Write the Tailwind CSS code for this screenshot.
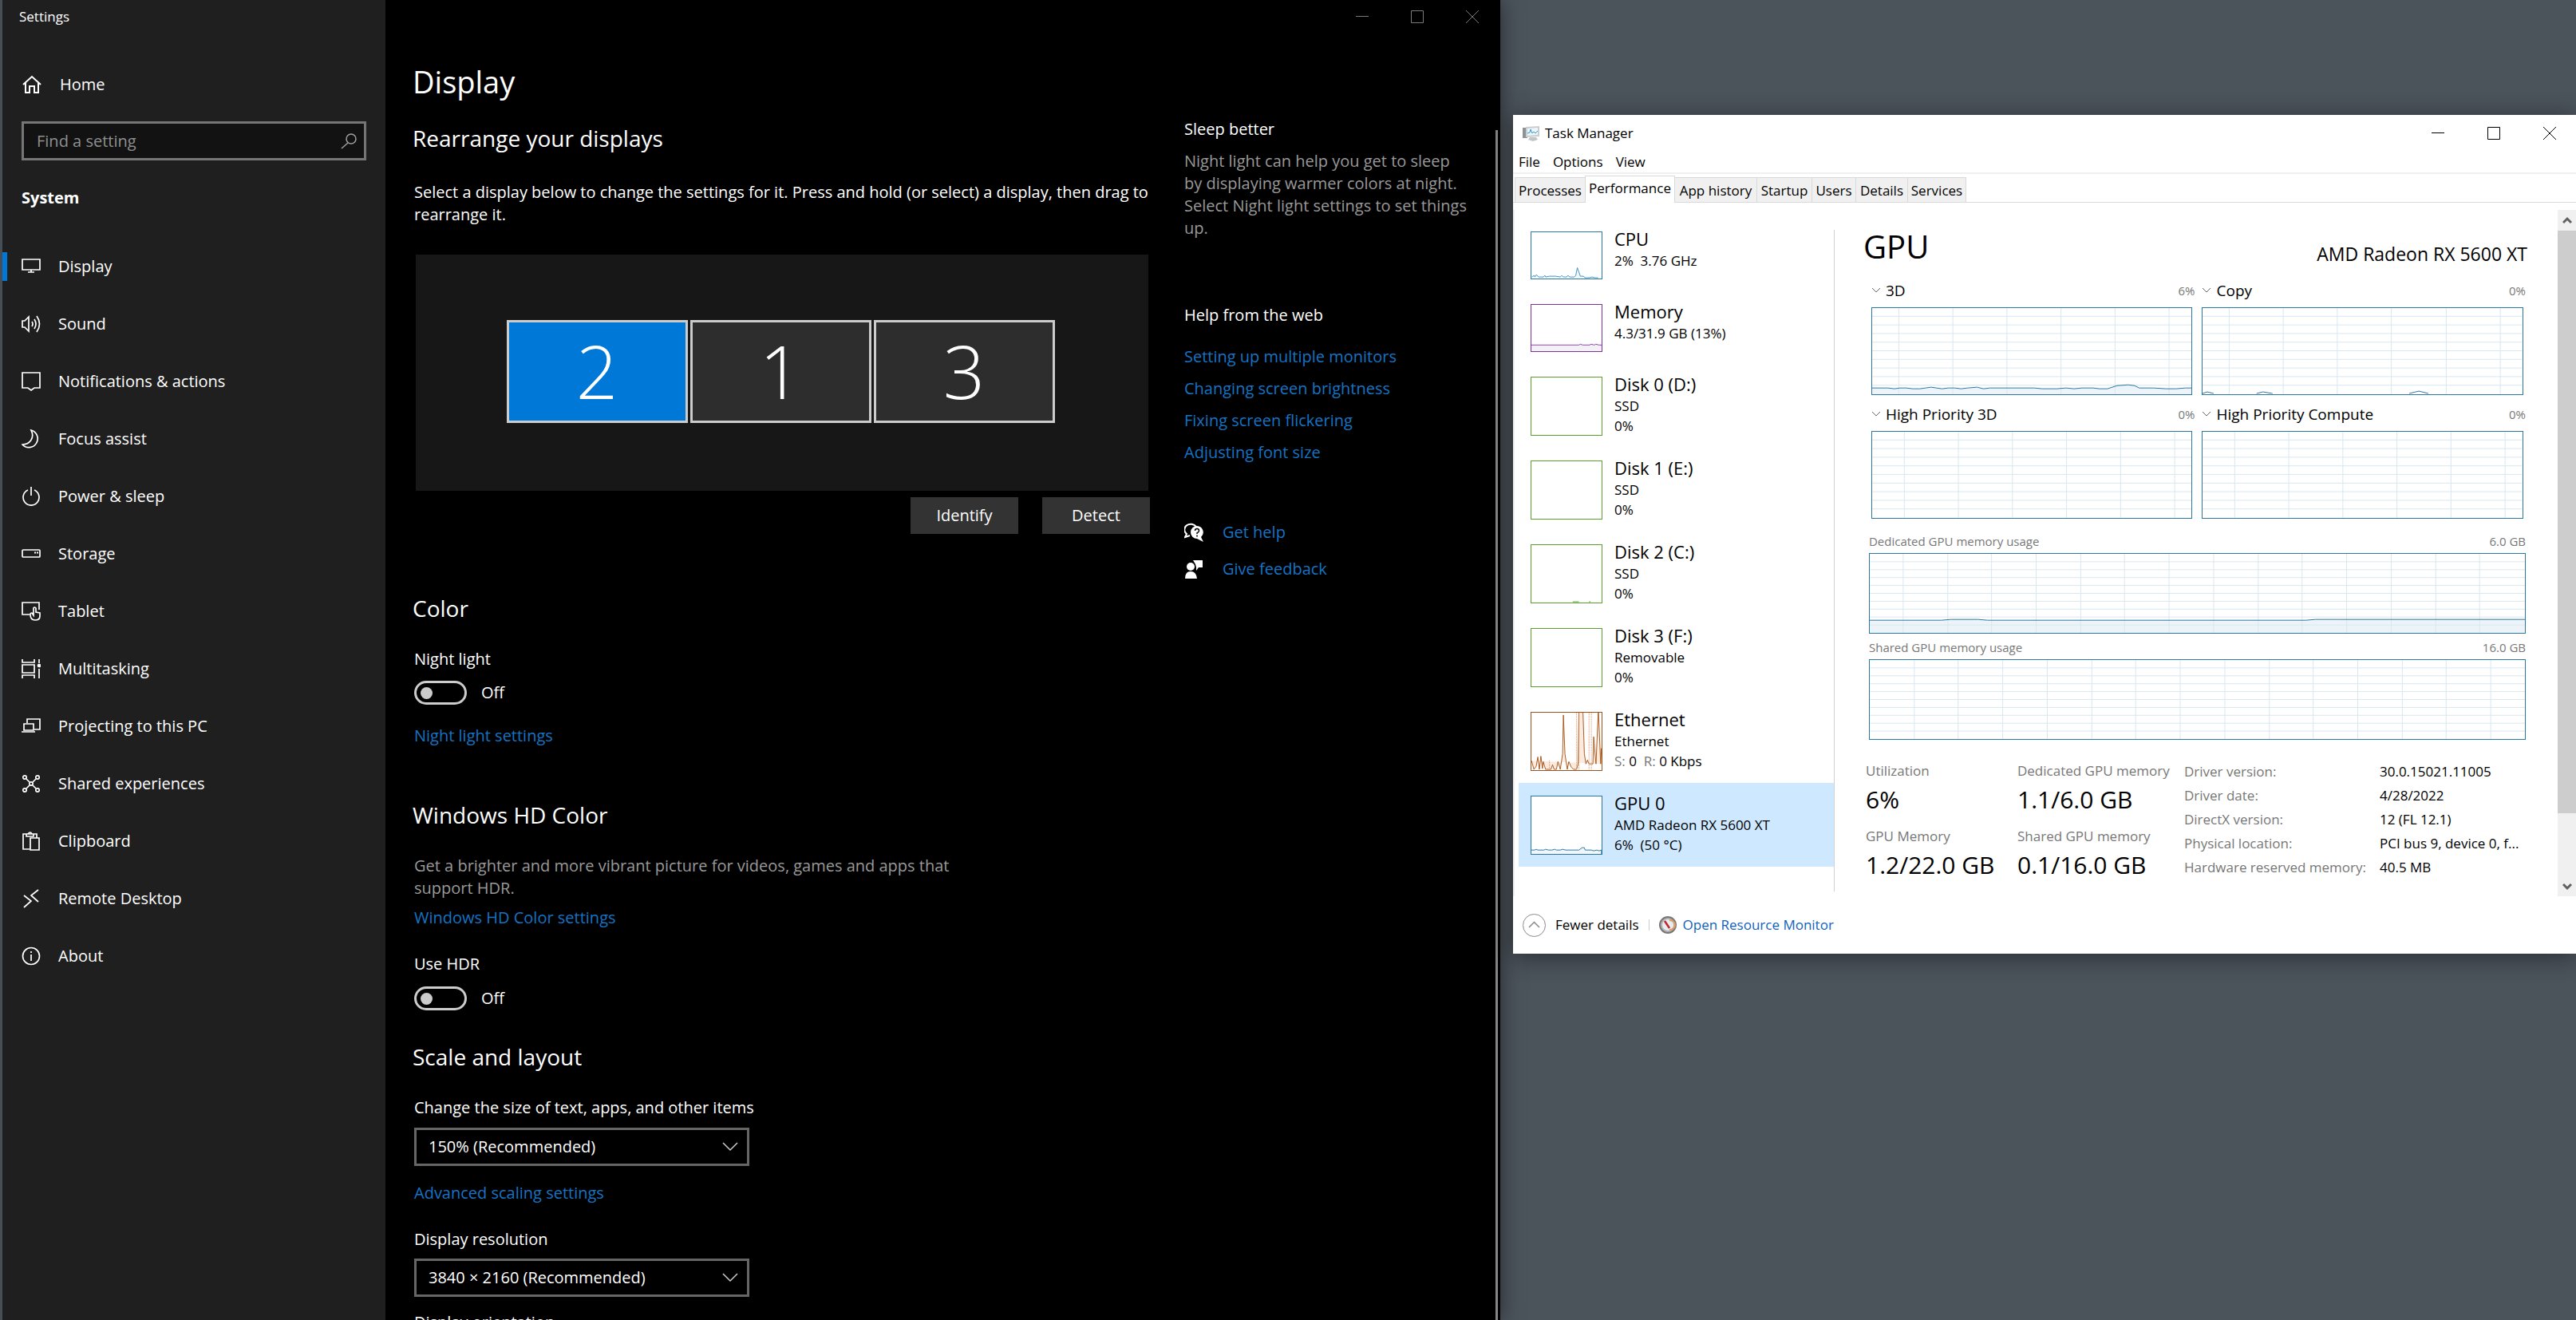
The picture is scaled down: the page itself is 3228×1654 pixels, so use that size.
<!DOCTYPE html>
<html lang="en">
<head>
    <meta charset="UTF-8">
    <meta name="viewport" content="width=device-width, initial-scale=1.0">
    <title>Settings - Display</title>
    <script src="https://cdn.jsdelivr.net/npm/@tailwindcss/browser@4"></script>
    <style>
        body { font-family: 'Open Sans', 'Noto Sans', sans-serif; }
    </style>
</head>
<body class="h-screen overflow-hidden bg-[#4b535b] flex">

    <!-- Settings window -->
    <div class="w-[58.24%] shrink-0 flex border-l-3 border-[#464f55] bg-black text-white text-[20px] leading-[28px] shadow-[0_0_24px_rgba(0,0,0,0.5)]">

        <!-- Sidebar -->
        <aside class="w-[480px] shrink-0 bg-[#1f1f1f]">
            <div class="h-[42px] pl-[21px] flex items-center text-[17px]">Settings</div>
            <a href="#" class="mt-[40px] h-[48px] pl-[24px] flex items-center gap-[22px]">
                <svg class="w-[26px] h-[26px]" viewBox="0 0 26 26" fill="none" stroke="currentColor" stroke-width="2"><path d="M2 13 13 3l11 10M5 11v12h5v-8h6v8h5V11"/></svg>
                Home
            </a>
            <div class="mt-[22px] mx-[24px] h-[49px] flex items-center border-3 border-[#767676] bg-[#121212] pr-[9px]">
                <input type="text" aria-label="Find a setting" placeholder="Find a setting" class="flex-1 min-w-0 h-full bg-transparent pl-[16px] outline-none placeholder:text-[#8f8f8f] placeholder:opacity-100">
                <svg class="w-[20px] h-[20px] text-[#a0a0a0]" viewBox="0 0 20 20" fill="none" stroke="currentColor" stroke-width="1.5"><circle cx="13" cy="7" r="6"/><path d="M9 12 1 19"/></svg>
            </div>
            <h2 class="mt-[33px] pl-[24px] font-bold">System</h2>
            <nav class="mt-[36px]">
                <a href="#" class="h-[72px] flex items-center">
                    <span class="w-[6px] h-[36px] mr-[18px] bg-[#0078d7]"></span>
                    <svg class="w-[24px] h-[24px] mr-[22px]" viewBox="0 0 24 24" fill="none" stroke="currentColor" stroke-width="1.7"><path d="M1 3h22v13H1zM8 19h8M12 16v3"/></svg>
                    Display
                </a>
                <a href="#" class="h-[72px] pl-[24px] flex items-center gap-[22px]">
                    <svg class="w-[24px] h-[24px]" viewBox="0 0 24 24" fill="none" stroke="currentColor" stroke-width="1.7"><path d="M1 8h3l5-5v18l-5-5H1zM13 9q2 3 0 6M16 6q4 6 0 12M19 2q7 10 0 20"/></svg>
                    Sound
                </a>
                <a href="#" class="h-[72px] pl-[24px] flex items-center gap-[22px]">
                    <svg class="w-[24px] h-[24px]" viewBox="0 0 24 24" fill="none" stroke="currentColor" stroke-width="1.7"><path d="M1 1h22v19h-7l-4 3-4-3H1z"/></svg>
                    Notifications &amp; actions
                </a>
                <a href="#" class="h-[72px] pl-[24px] flex items-center gap-[22px]">
                    <svg class="w-[24px] h-[24px]" viewBox="0 0 24 24" fill="none" stroke="currentColor" stroke-width="1.7"><path d="M12 1a11 11 0 1 1-11 18C10 19 17 11 12 1z"/></svg>
                    Focus assist
                </a>
                <a href="#" class="h-[72px] pl-[24px] flex items-center gap-[22px]">
                    <svg class="w-[24px] h-[24px]" viewBox="0 0 24 24" fill="none" stroke="currentColor" stroke-width="1.7"><path d="M12 0v11M8 4a10 10 0 1 0 8 0"/></svg>
                    Power &amp; sleep
                </a>
                <a href="#" class="h-[72px] pl-[24px] flex items-center gap-[22px]">
                    <svg class="w-[24px] h-[24px]" viewBox="0 0 24 24" fill="none" stroke="currentColor" stroke-width="1.7"><rect x="1" y="7" width="22" height="9" rx="1"/><path d="M16 10.500h2M19 10.500h2" stroke-width="2"/></svg>
                    Storage
                </a>
                <a href="#" class="h-[72px] pl-[24px] flex items-center gap-[22px]">
                    <svg class="w-[24px] h-[24px]" viewBox="0 0 24 24" fill="none" stroke="currentColor" stroke-width="1.7"><path d="M10 16H1V1h21v9M11 16q0-2 2-2l2 3V8q1-2 3 0v5l5 1v4q0 5-6 5-6 0-6-7z"/></svg>
                    Tablet
                </a>
                <a href="#" class="h-[72px] pl-[24px] flex items-center gap-[22px]">
                    <svg class="w-[24px] h-[24px]" viewBox="0 0 24 24" fill="none" stroke="currentColor" stroke-width="1.7"><path d="M1 0v4h15V0M1 24v-4h15v4M1 7h15v10H1zM22 0v5M22 12v12"/><circle cx="22" cy="8" r="1.5" fill="currentColor"/></svg>
                    Multitasking
                </a>
                <a href="#" class="h-[72px] pl-[24px] flex items-center gap-[22px]">
                    <svg class="w-[24px] h-[24px]" viewBox="0 0 24 24" fill="none" stroke="currentColor" stroke-width="1.7"><path d="M7 8V3h16v13h-7M3 9h12v8H3zM0 19h17"/></svg>
                    Projecting to this PC
                </a>
                <a href="#" class="h-[72px] pl-[24px] flex items-center gap-[22px]">
                    <svg class="w-[24px] h-[24px]" viewBox="0 0 24 24" fill="none" stroke="currentColor" stroke-width="1.7"><path d="m6 6 4 4M18 6l-4 4M6 18l4-4M18 18l-4-4"/><circle cx="12" cy="12" r="2.2"/><circle cx="4" cy="4" r="2.2"/><circle cx="20" cy="4" r="2.2"/><circle cx="4" cy="20" r="2.2"/><circle cx="20" cy="20" r="2.2"/></svg>
                    Shared experiences
                </a>
                <a href="#" class="h-[72px] pl-[24px] flex items-center gap-[22px]">
                    <svg class="w-[24px] h-[24px]" viewBox="0 0 24 24" fill="none" stroke="currentColor" stroke-width="1.7"><path d="M10 22H2V3h17v5M6 3v3h9V3h-2q-2-4-5 0zM11 8h11v15H11z"/></svg>
                    Clipboard
                </a>
                <a href="#" class="h-[72px] pl-[24px] flex items-center gap-[22px]">
                    <svg class="w-[24px] h-[24px]" viewBox="0 0 24 24" fill="none" stroke="currentColor" stroke-width="1.7"><path d="m3 8 9 7-9 8M21 1l-9 7 9 8"/></svg>
                    Remote Desktop
                </a>
                <a href="#" class="h-[72px] pl-[24px] flex items-center gap-[22px]">
                    <svg class="w-[24px] h-[24px]" viewBox="0 0 24 24" fill="none" stroke="currentColor" stroke-width="1.7"><circle cx="12" cy="12" r="10.5"/><path d="M12 10v8M12 6v2"/></svg>
                    About
                </a>
            </nav>
        </aside>

        <!-- Page -->
        <main class="flex-1 min-w-0 flex flex-col">
            <div class="h-[42px] shrink-0 pr-[27px] flex items-center justify-end gap-[53px] text-[#7a7a7a]">
                <button type="button" aria-label="Minimize"><svg class="w-[16px] h-[16px]" viewBox="0 0 16 16" fill="none" stroke="currentColor"><path d="M0 7.500h16"/></svg></button>
                <button type="button" aria-label="Maximize"><svg class="w-[16px] h-[16px]" viewBox="0 0 16 16" fill="none" stroke="currentColor"><path d="M.5.5h15v15H.5z"/></svg></button>
                <button type="button" aria-label="Close"><svg class="w-[16px] h-[16px]" viewBox="0 0 16 16" fill="none" stroke="currentColor"><path d="m0 0 16 16M16 0 0 16"/></svg></button>
            </div>

            <div class="flex-1 min-h-0 flex">
                <div class="w-[926px] shrink-0 pl-[34px] pt-[34px]">
                    <h1 class="text-[38px] leading-[52px]">Display</h1>
                    <h2 class="mt-[27px] text-[28px] leading-[36px]">Rearrange your displays</h2>
                    <div class="pl-[2px]">
                        <p class="mt-[36px] -mr-[32px]">Select a display below to change the settings for it. Press and hold (or select) a display, then drag to<br>rearrange it.</p>
                        <div class="mt-[36px] ml-[2px] -mr-[30px] pr-[4px] pb-[4px] h-[296px] bg-[#171717] flex items-center justify-center gap-[3px] text-[92px] leading-[100px] font-light">
                            <button type="button" class="w-[227px] h-[129px] border-3 border-[#ccc] bg-[#0078d7] flex items-center justify-center">2</button>
                            <button type="button" class="w-[227px] h-[129px] border-3 border-[#ccc] bg-[#2d2d2d] flex items-center justify-center">1</button>
                            <button type="button" class="w-[227px] h-[129px] border-3 border-[#ccc] bg-[#2d2d2d] flex items-center justify-center">3</button>
                        </div>
                        <div class="mt-[8px] -mr-[32px] flex justify-end gap-[30px]">
                            <button type="button" class="w-[135px] h-[46px] bg-[#333]">Identify</button>
                            <button type="button" class="w-[135px] h-[46px] bg-[#333]">Detect</button>
                        </div>
                    </div>

                    <h2 class="mt-[75px] text-[28px] leading-[36px]">Color</h2>
                    <div class="pl-[2px] flex flex-col items-start">
                        <label for="night-light" class="mt-[32px]">Night light</label>
                        <div class="mt-[13px] h-[30px] flex items-center gap-[18px]">
                            <input type="checkbox" id="night-light" class="appearance-none w-[66px] h-[30px] rounded-full border-3 border-[#ccc] flex items-center pl-[5px] before:w-[15px] before:h-[15px] before:rounded-full before:bg-[#ccc]">
                            <span>Off</span>
                        </div>
                        <a href="#" class="mt-[25px] text-[#1673c4]">Night light settings</a>
                    </div>

                    <h2 class="mt-[67px] text-[28px] leading-[36px]">Windows HD Color</h2>
                    <div class="pl-[2px] flex flex-col items-start">
                        <p class="mt-[32px] w-[700px] text-[#999]">Get a brighter and more vibrant picture for videos, games and apps that support HDR.</p>
                        <a href="#" class="mt-[9px] text-[#1673c4]">Windows HD Color settings</a>
                        <label for="use-hdr" class="mt-[30px]">Use HDR</label>
                        <div class="mt-[14px] h-[30px] flex items-center gap-[18px]">
                            <input type="checkbox" id="use-hdr" class="appearance-none w-[66px] h-[30px] rounded-full border-3 border-[#ccc] flex items-center pl-[5px] before:w-[15px] before:h-[15px] before:rounded-full before:bg-[#ccc]">
                            <span>Off</span>
                        </div>
                    </div>

                    <h2 class="mt-[40px] text-[28px] leading-[36px]">Scale and layout</h2>
                    <div class="pl-[2px] flex flex-col items-start">
                        <label for="scale" class="mt-[32px]">Change the size of text, apps, and other items</label>
                        <div class="mt-[11px] w-[420px] grid items-center">
                            <select id="scale" class="col-start-1 row-start-1 appearance-none w-full h-[48px] pl-[15px] border-3 border-[#666] bg-black">
                                <option>150% (Recommended)</option>
                            </select>
                            <svg class="col-start-1 row-start-1 justify-self-end mr-[14px] w-[20px] h-[12px] pointer-events-none" viewBox="0 0 20 12" fill="none" stroke="#ccc" stroke-width="1.5"><path d="m1 1 9 9 9-9"/></svg>
                        </div>
                        <a href="#" class="mt-[20px] text-[#1673c4]">Advanced scaling settings</a>
                        <label for="resolution" class="mt-[30px]">Display resolution</label>
                        <div class="mt-[10px] w-[420px] grid items-center">
                            <select id="resolution" class="col-start-1 row-start-1 appearance-none w-full h-[48px] pl-[15px] border-3 border-[#666] bg-black">
                                <option>3840 × 2160 (Recommended)</option>
                            </select>
                            <svg class="col-start-1 row-start-1 justify-self-end mr-[14px] w-[20px] h-[12px] pointer-events-none" viewBox="0 0 20 12" fill="none" stroke="#ccc" stroke-width="1.5"><path d="m1 1 9 9 9-9"/></svg>
                        </div>
                        <div class="mt-[18px]">Display orientation</div>
                    </div>
                </div>

                <!-- Related help -->
                <div class="flex-1 min-w-0 pl-[75px] pt-[106px]">
                    <h3>Sleep better</h3>
                    <p class="mt-[12px] max-w-[372px] text-[#999]">Night light can help you get to sleep<br>by displaying warmer colors at night. Select Night light settings to set things up.</p>
                    <h3 class="mt-[81px]">Help from the web</h3>
                    <div class="mt-[24px] flex flex-col items-start gap-[12px] text-[#1673c4]">
                        <a href="#">Setting up multiple monitors</a>
                        <a href="#">Changing screen brightness</a>
                        <a href="#">Fixing screen flickering</a>
                        <a href="#">Adjusting font size</a>
                    </div>
                    <div class="mt-[72px] flex items-center gap-[24px]">
                        <svg class="w-[24px] h-[24px]" viewBox="0 0 24 24"><path d="M15 5A8 7 0 1 0 3 14l-2 4 6-2" fill="none" stroke="#fff" stroke-width="2"/><path d="M16 4a8 8 0 1 0 0 16l8 4-3-6a8 8 0 0 0-5-14z" fill="#fff"/><path d="M13.500 10q0-2.500 2.500-2.500T18.500 10q0 1.500-2.500 3v1M16 15.500v2" fill="none" stroke="#000" stroke-width="1.500"/></svg>
                        <a href="#" class="text-[#1673c4]">Get help</a>
                    </div>
                    <div class="mt-[18px] flex items-center gap-[24px]">
                        <svg class="w-[24px] h-[24px]" viewBox="0 0 24 24" fill="#fff"><circle cx="8" cy="9" r="5"/><path d="M1 24q0-9 7-9t8 9zM11 1h12v9h-5l-3 4v-4l-1-4z"/></svg>
                        <a href="#" class="text-[#1673c4]">Give feedback</a>
                    </div>
                </div>
                <div class="w-[3px] mt-[121px] mr-[3px] bg-[#858585]"></div>
            </div>
        </main>
    </div>

    <!-- Task Manager window -->
    <div class="flex-1 min-w-0 pl-[16px] pt-[144px]">
        <div class="bg-white text-black text-[17px] leading-[24px] shadow-[0_4px_28px_rgba(0,0,0,0.45)]">
            <div class="h-[46px] pl-[12px] pr-[25px] flex items-center">
                <svg class="w-[22px] h-[20px]" viewBox="0 0 22 20"><path d="M0 3h6v13H0z" fill="#8d9296"/><path d="M4 2 21 1v13L4 15z" fill="#c9cdd1"/><path d="M6 4 19 3v9L6 13z" fill="#eaf6fc"/><path d="m6 10 3-1 1-4 2 5 2-2 2 2 3-3" fill="none" stroke="#3d97cd"/><path d="M9 15h8l2 3-6 2-6-2z" fill="#c2c5c8"/></svg>
                <span class="ml-[6px] flex-1">Task Manager</span>
                <div class="flex gap-[54px]">
                    <button type="button" aria-label="Minimize"><svg class="w-[16px] h-[16px]" viewBox="0 0 16 16" fill="none" stroke="#000"><path d="M0 7.500h16"/></svg></button>
                    <button type="button" aria-label="Maximize"><svg class="w-[16px] h-[16px]" viewBox="0 0 16 16" fill="none" stroke="#000"><path d="M.5.5h15v15H.5z"/></svg></button>
                    <button type="button" aria-label="Close"><svg class="w-[16px] h-[16px]" viewBox="0 0 16 16" fill="none" stroke="#000"><path d="m0 0 16 16M16 0 0 16"/></svg></button>
                </div>
            </div>
            <div class="h-[28px] pl-[7px] flex gap-[16px] border-b-2 border-[#f0f0f0]">
                <button type="button">File</button>
                <button type="button">Options</button>
                <button type="button">View</button>
            </div>

            <div class="h-[36px] pl-[2px] flex items-end border-b border-[#d9d9d9]" role="tablist">
                <button type="button" role="tab" class="w-[88px] h-[31px] pt-[2px] bg-[#f0f0f0] border-t border-l border-[#d9d9d9]">Processes</button>
                <button type="button" role="tab" aria-selected="true" class="w-[113px] h-[34px] -mb-px pb-[4px] bg-white border-t border-x border-[#d9d9d9]">Performance</button>
                <button type="button" role="tab" class="w-[103px] h-[31px] pt-[2px] bg-[#f0f0f0] border-t border-r border-[#d9d9d9]">App history</button>
                <button type="button" role="tab" class="w-[69px] h-[31px] pt-[2px] bg-[#f0f0f0] border-t border-r border-[#d9d9d9]">Startup</button>
                <button type="button" role="tab" class="w-[55px] h-[31px] pt-[2px] bg-[#f0f0f0] border-t border-r border-[#d9d9d9]">Users</button>
                <button type="button" role="tab" class="w-[65px] h-[31px] pt-[2px] bg-[#f0f0f0] border-t border-r border-[#d9d9d9]">Details</button>
                <button type="button" role="tab" class="w-[73px] h-[31px] pt-[2px] bg-[#f0f0f0] border-t border-r border-[#d9d9d9]">Services</button>
            </div>

            <div class="mt-[9px] flex border-l-2 border-[#f0f0f0]">
                <!-- Resource list -->
                <ul class="w-[400px] shrink-0 pl-[5px] pt-[11px] leading-[25px]">
                    <li class="h-[91px] pt-[10px] pl-[15px] flex gap-[15px]">
                        <svg class="mt-[6px] w-[90px] h-[60px] border border-[#2a77a3]" viewBox="0 0 90 60" fill="#f1f6fa" stroke="#3f93c3"><path d="m0 58 3-2 1 2 2-3 3 3h6l2-2 1 2 5-1h8l6 1 2-2 2 2h4l2-2 2 2h6l2-2 2-10 4 11h4l2 2h6l3-1 4 1h4"/></svg>
                        <div><div class="text-[22px] leading-[30px]">CPU</div><div class="whitespace-pre">2%  3.76 GHz</div></div>
                    </li>
                    <li class="h-[91px] pt-[10px] pl-[15px] flex gap-[15px]">
                        <svg class="mt-[6px] w-[90px] h-[60px] border border-[#7a3396]" viewBox="0 0 90 60" fill="#f4f0f8" stroke="#8c3fa8"><path d="M-1 61V52h62l2-1 3 1h9l2-1 4 1 2-1 4 1h4v9z"/></svg>
                        <div><div class="text-[22px] leading-[30px]">Memory</div><div>4.3/31.9 GB (13%)</div></div>
                    </li>
                    <li class="h-[105px] pt-[10px] pl-[15px] flex gap-[15px]">
                        <div class="mt-[6px] w-[90px] h-[74px] border border-[#5ba02d]"></div>
                        <div><div class="text-[22px] leading-[30px]">Disk 0 (D:)</div><div>SSD</div><div>0%</div></div>
                    </li>
                    <li class="h-[105px] pt-[10px] pl-[15px] flex gap-[15px]">
                        <div class="mt-[6px] w-[90px] h-[74px] border border-[#5ba02d]"></div>
                        <div><div class="text-[22px] leading-[30px]">Disk 1 (E:)</div><div>SSD</div><div>0%</div></div>
                    </li>
                    <li class="h-[105px] pt-[10px] pl-[15px] flex gap-[15px]">
                        <svg class="mt-[6px] w-[90px] h-[74px] border border-[#5ba02d]" viewBox="0 0 90 74" fill="none" stroke="#5ba02d"><path d="M53 73h8M74 73h2"/></svg>
                        <div><div class="text-[22px] leading-[30px]">Disk 2 (C:)</div><div>SSD</div><div>0%</div></div>
                    </li>
                    <li class="h-[105px] pt-[10px] pl-[15px] flex gap-[15px]">
                        <div class="mt-[6px] w-[90px] h-[74px] border border-[#5ba02d]"></div>
                        <div><div class="text-[22px] leading-[30px]">Disk 3 (F:)</div><div>Removable</div><div>0%</div></div>
                    </li>
                    <li class="h-[105px] pt-[10px] pl-[15px] flex gap-[15px]">
                        <svg class="mt-[6px] w-[90px] h-[74px] border border-[#99541f]" viewBox="0 0 90 74" fill="#fbeade" stroke="#a9591e">
                            <path d="m0 62 3 11 3-4 2-12 2 16 2-17 2 16 1-9 3 10h7l2-6 2 6h3l2-10 3 10 3-20 1-50 2 50 3 20 2-10 3 7 3 3h4l2-7 1-73h5l2 60 2 13 2-5 2 5h5l1-35 2 25 1 10 3-71 3 71 1-20 3 15 2 5"/>
                            <path d="M58 0v73M74 0v73M77 0v73M23 62v11M61 0v73" fill="none" stroke="#e08654" stroke-dasharray="1 1"/>
                        </svg>
                        <div><div class="text-[22px] leading-[30px]">Ethernet</div><div>Ethernet</div><div class="whitespace-pre"><span class="text-[#777]">S:</span> 0  <span class="text-[#777]">R:</span> 0 Kbps</div></div>
                    </li>
                    <li class="h-[105px] pt-[10px] pl-[15px] flex gap-[15px] bg-[#cde8ff]">
                        <svg class="mt-[6px] w-[90px] h-[74px] border border-[#2a77a3] bg-white" viewBox="0 0 90 74" fill="#f1f6fa" stroke="#2a77a3"><path d="M-1 75v-6h5l2-1 2 1h8l2-1 4 1h4l4-1 2 1h5l3-1 4 1h17l4-3h3l1 3h8l3 1 4-1 3 1 3-1v6z"/></svg>
                        <div><div class="text-[22px] leading-[30px]">GPU 0</div><div>AMD Radeon RX 5600 XT</div><div class="whitespace-pre">6%  (50 °C)</div></div>
                    </li>
                </ul>
                <div class="w-px mt-[25px] mb-[6px] bg-[#d0d0d0]"></div>

                <!-- GPU detail -->
                <section class="flex-1 min-w-0 pl-[39px] pr-[38px] pt-[20px] pb-[19px]">
                    <div class="h-[52px] flex justify-between">
                        <h2 class="-ml-[3px] text-[40px] leading-[52px]">GPU</h2>
                        <div class="pt-[19px] text-[23px] leading-[32px]">AMD Radeon RX 5600 XT</div>
                    </div>

                    <div class="mt-[17px] pl-[7px] pr-[5px] grid grid-cols-2 gap-x-[12px] gap-y-[12px]">
                        <div>
                            <div class="h-[24px] flex items-center text-[19px]">
                                <svg class="w-[12px] h-[8px] mr-[6px]" viewBox="0 0 12 8" fill="none" stroke="#666"><path d="m1 1 5 5 5-5"/></svg>3D
                                <span class="ml-auto -mr-[3px] text-[15px] text-[#777]">6%</span>
                            </div>
                            <svg class="mt-[9px] w-full h-[110px] border border-[#2a77a3]" viewBox="0 0 402 110" preserveAspectRatio="none" fill="none">
                                <path d="M0 110v-8h20l8 1 7-1h8l8 1h9l14-2 14 2 8-1h8l8 1 8-1 12-1 8 2 8-1h56l10 1h18l12-1 10 1 10-1h14l8 1h10l12-4 14-1 8 1 6 3h18l16 1h12l12-1h8l7 2 8-1h15v7z" fill="#edf4f9"/>
                                <path d="M33.500 0v110m68-110v110m68-110v110m68-110v110m68-110v110m68-110v110M0 10.500h402M0 21.500h402M0 32.500h402M0 43.500h402M0 54.500h402M0 65.500h402M0 76.500h402M0 87.500h402M0 98.500h402" stroke="#d9e7ee"/>
                                <path d="M0 102h20l8 1 7-1h8l8 1h9l14-2 14 2 8-1h8l8 1 8-1 12-1 8 2 8-1h56l10 1h18l12-1 10 1 10-1h14l8 1h10l12-4 14-1 8 1 6 3h18l16 1h12l12-1h8l7 2 8-1h15" stroke="#2a77a3"/>
                            </svg>
                        </div>
                        <div>
                            <div class="h-[24px] flex items-center text-[19px]">
                                <svg class="w-[12px] h-[8px] mr-[6px]" viewBox="0 0 12 8" fill="none" stroke="#666"><path d="m1 1 5 5 5-5"/></svg>Copy
                                <span class="ml-auto -mr-[3px] text-[15px] text-[#777]">0%</span>
                            </div>
                            <svg class="mt-[9px] w-full h-[110px] border border-[#2a77a3]" viewBox="0 0 402 110" preserveAspectRatio="none" fill="none">
                                <path d="M33.500 0v110m68-110v110m68-110v110m68-110v110m69-110v110m68-110v110M0 10.500h402M0 21.500h402M0 32.500h402M0 43.500h402M0 54.500h402M0 65.500h402M0 76.500h402M0 87.500h402M0 98.500h402" stroke="#d9e7ee"/>
                                <path d="m0 109 6-2 8 2M68 109l8-2 12 2M260 109l12-3 12 3" stroke="#2a77a3"/>
                            </svg>
                        </div>
                        <div>
                            <div class="h-[24px] flex items-center text-[19px]">
                                <svg class="w-[12px] h-[8px] mr-[6px]" viewBox="0 0 12 8" fill="none" stroke="#666"><path d="m1 1 5 5 5-5"/></svg>High Priority 3D
                                <span class="ml-auto -mr-[3px] text-[15px] text-[#777]">0%</span>
                            </div>
                            <svg class="mt-[9px] w-full h-[110px] border border-[#2a77a3]" viewBox="0 0 402 110" preserveAspectRatio="none" fill="none">
                                <path d="M40.500 0v110m68-110v110m68-110v110m68-110v110m68-110v110m68-110v110M0 10.500h402M0 21.500h402M0 32.500h402M0 43.500h402M0 54.500h402M0 65.500h402M0 76.500h402M0 87.500h402M0 98.500h402" stroke="#d9e7ee"/>
                            </svg>
                        </div>
                        <div>
                            <div class="h-[24px] flex items-center text-[19px]">
                                <svg class="w-[12px] h-[8px] mr-[6px]" viewBox="0 0 12 8" fill="none" stroke="#666"><path d="m1 1 5 5 5-5"/></svg>High Priority Compute
                                <span class="ml-auto -mr-[3px] text-[15px] text-[#777]">0%</span>
                            </div>
                            <svg class="mt-[9px] w-full h-[110px] border border-[#2a77a3]" viewBox="0 0 402 110" preserveAspectRatio="none" fill="none">
                                <path d="M40.500 0v110m68-110v110m68-110v110m68-110v110m68-110v110m68-110v110M0 10.500h402M0 21.500h402M0 32.500h402M0 43.500h402M0 54.500h402M0 65.500h402M0 76.500h402M0 87.500h402M0 98.500h402" stroke="#d9e7ee"/>
                            </svg>
                        </div>
                    </div>

                    <div class="mt-[18px] pl-[4px] pr-[2px]">
                        <div class="flex justify-between text-[15px] leading-[20px] text-[#777]"><span>Dedicated GPU memory usage</span><span>6.0 GB</span></div>
                        <svg class="mt-[5px] w-full h-[101px] border border-[#2a77a3]" viewBox="0 0 823 100" preserveAspectRatio="none" fill="none">
                            <path d="M0 100V84h90l12-1h34l12 1h440l12-1h223v17z" fill="#edf4f9"/>
                            <path d="M42 0v100M98 0v100M153 0v100M209 0v100M265 0v100M320 0v100M376 0v100M432 0v100M488 0v100M543 0v100M599 0v100M655 0v100M711 0v100M766 0v100M0 10h823M0 20h823M0 30h823M0 40h823M0 50h823M0 60h823M0 70h823M0 80h823M0 90h823" stroke="#d9e7ee"/>
                            <path d="M0 84h90l12-1h34l12 1h400l12-1h263" stroke="#2a77a3"/>
                        </svg>
                        <div class="mt-[7px] flex justify-between text-[15px] leading-[20px] text-[#777]"><span>Shared GPU memory usage</span><span>16.0 GB</span></div>
                        <svg class="mt-[5px] w-full h-[101px] border border-[#2a77a3]" viewBox="0 0 823 100" preserveAspectRatio="none" fill="none">
                            <path d="M56 0v100M111 0v100M167 0v100M223 0v100M279 0v100M334 0v100M390 0v100M446 0v100M502 0v100M557 0v100M613 0v100M669 0v100M724 0v100M780 0v100M0 10h823M0 20h823M0 30h823M0 40h823M0 50h823M0 60h823M0 70h823M0 80h823M0 90h823" stroke="#d9e7ee"/>
                        </svg>
                    </div>

                    <div class="mt-[25px] flex">
                        <dl class="w-[190px] pt-[2px]">
                            <dt class="text-[#777]">Utilization</dt>
                            <dd class="mt-[4px] text-[30px] leading-[40px]">6%</dd>
                            <dt class="mt-[14px] text-[#777]">GPU Memory</dt>
                            <dd class="mt-[4px] text-[30px] leading-[40px]">1.2/22.0 GB</dd>
                        </dl>
                        <dl class="w-[209px] pt-[2px]">
                            <dt class="text-[#777]">Dedicated GPU memory</dt>
                            <dd class="mt-[4px] text-[30px] leading-[40px]">1.1/6.0 GB</dd>
                            <dt class="mt-[14px] text-[#777]">Shared GPU memory</dt>
                            <dd class="mt-[4px] text-[30px] leading-[40px]">0.1/16.0 GB</dd>
                        </dl>
                        <table class="flex-1 self-start text-left">
                            <tbody>
                                <tr class="h-[30px]"><th class="w-[245px] font-normal text-[#777]">Driver version:</th><td>30.0.15021.11005</td></tr>
                                <tr class="h-[30px]"><th class="font-normal text-[#777]">Driver date:</th><td>4/28/2022</td></tr>
                                <tr class="h-[30px]"><th class="font-normal text-[#777]">DirectX version:</th><td>12 (FL 12.1)</td></tr>
                                <tr class="h-[30px]"><th class="font-normal text-[#777]">Physical location:</th><td>PCI bus 9, device 0, f...</td></tr>
                                <tr class="h-[30px]"><th class="font-normal text-[#777]">Hardware reserved memory:</th><td>40.5 MB</td></tr>
                            </tbody>
                        </table>
                    </div>
                </section>

                <!-- Scrollbar -->
                <div class="w-[23px] shrink-0 bg-[#f0f0f0] flex flex-col items-center">
                    <svg class="my-[8px] w-[12px] h-[10px] shrink-0" viewBox="0 0 12 10" fill="none" stroke="#606060" stroke-width="3"><path d="m1 8 5-5 5 5"/></svg>
                    <div class="w-full h-[730px] bg-[#cdcdcd]"></div>
                    <svg class="mt-auto mb-[7px] w-[12px] h-[10px] shrink-0" viewBox="0 0 12 10" fill="none" stroke="#606060" stroke-width="3"><path d="m1 2 5 5 5-5"/></svg>
                </div>
            </div>

            <div class="h-[72px] pl-[12px] flex items-center">
                <button type="button" class="flex items-center gap-[12px]">
                    <svg class="w-[29px] h-[29px]" viewBox="0 0 29 29" fill="none" stroke="#8a8a8a"><circle cx="14.500" cy="14.500" r="14"/><path d="m8 17 6.500-6.500L21 17" stroke-width="1.500"/></svg>
                    Fewer details
                </button>
                <span class="mx-[12px] w-px h-[14px] bg-[#ccc]"></span>
                <svg class="w-[22px] h-[22px] mr-[8px]" viewBox="0 0 22 22"><circle cx="11" cy="11" r="10" fill="#b5b5b5" stroke="#777" stroke-width="2"/><circle cx="11" cy="11" r="7" fill="#e6ecef"/><path d="M13 5a7 6 0 0 1 0 12" fill="none" stroke="#e29a5c" stroke-width="2"/><path d="m7 6 6 9" stroke="#c3262c" stroke-width="2.500"/></svg>
                <a href="#" class="text-[#0f62b8]">Open Resource Monitor</a>
            </div>
        </div>
    </div>

</body>
</html>
